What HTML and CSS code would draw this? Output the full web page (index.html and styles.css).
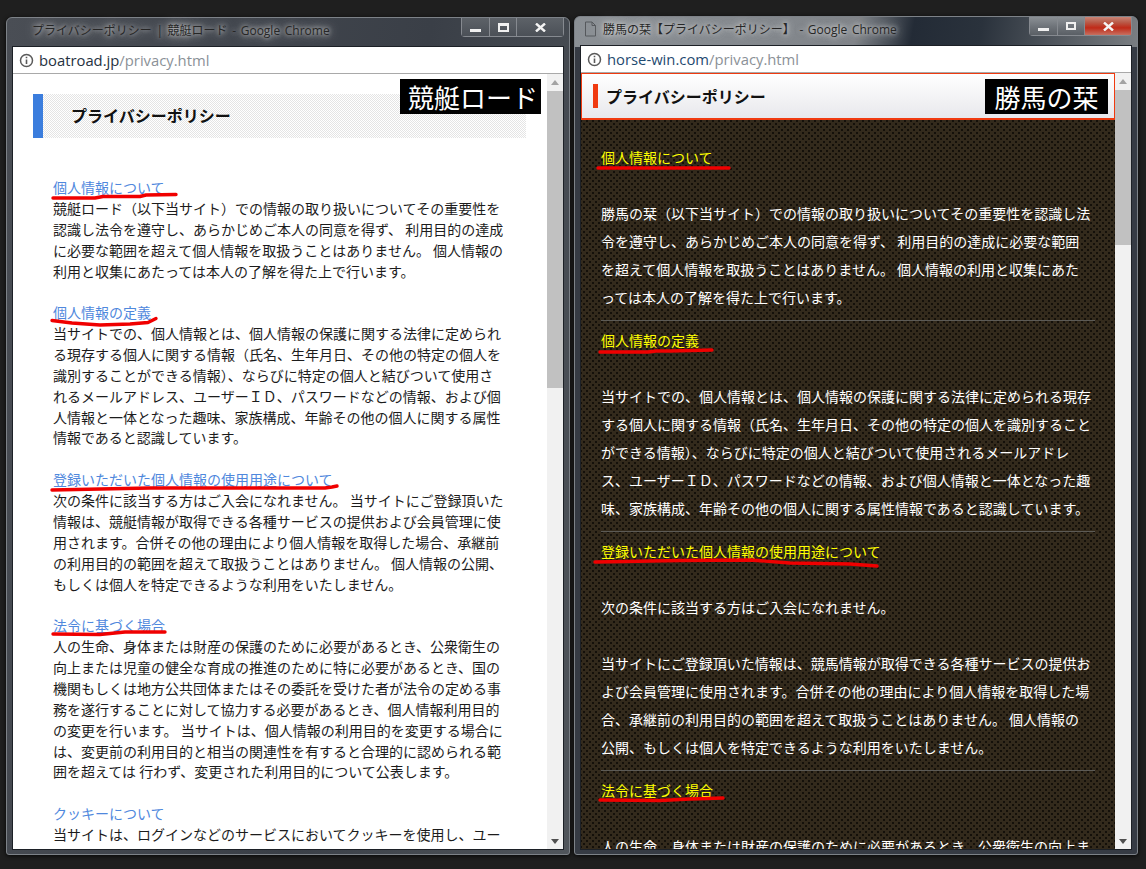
FILE: index.html
```html
<!DOCTYPE html>
<html lang="ja">
<head>
    <meta charset="UTF-8">
    <meta name="viewport" content="width=device-width, initial-scale=1.0">
    <title>プライバシーポリシー比較</title>
    <link rel="stylesheet" href="styles.css">
</head>
<body>

    <div class="desktop">

        <!-- 左のウィンドウ -->
        <div class="window window_left">
            <div class="titlebar">
                <div class="tab_title">
                    <span class="title_text">プライバシーポリシー | 競艇ロード - Google Chrome</span>
                </div>
                <div class="controls">
                    <span class="ctrl ctrl_min"><i class="icon_min"></i></span>
                    <span class="ctrl ctrl_max"><i class="icon_max"></i></span>
                    <span class="ctrl ctrl_close">
                        <svg width="11" height="9" viewBox="0 0 11 9"><path d="M1 0.5 L10 8.5 M10 0.5 L1 8.5" stroke="#f4f4f4" stroke-width="2.4"/></svg>
                    </span>
                </div>
            </div>
            <div class="inner">
                <div class="urlbar">
                    <svg class="info" width="15" height="15" viewBox="0 0 15 15"><circle cx="7.5" cy="7.5" r="6" fill="none" stroke="#5a5a5a" stroke-width="1.5"/><path d="M7.5 6.5 V11 M7.5 3.8 V5.2" stroke="#5a5a5a" stroke-width="1.6"/></svg>
                    <span class="host">boatroad.jp</span><span class="path">/privacy.html</span>
                </div>
                <div class="view">
                    <div class="page page_boat">
                        <h1 class="boat_head">プライバシーポリシー</h1>

                        <h2 class="boat_link">個人情報について</h2>
                        <p class="boat_text">競艇ロード（以下当サイト）での情報の取り扱いについてその重要性を<br>認識し法令を遵守し、あらかじめご本人の同意を得ず、 利用目的の達成<br>に必要な範囲を超えて個人情報を取扱うことはありません。 個人情報の<br>利用と収集にあたっては本人の了解を得た上で行います。</p>

                        <h2 class="boat_link">個人情報の定義</h2>
                        <p class="boat_text">当サイトでの、個人情報とは、個人情報の保護に関する法律に定められ<br>る現存する個人に関する情報（氏名、生年月日、その他の特定の個人を<br>識別することができる情報）、ならびに特定の個人と結びついて使用さ<br>れるメールアドレス、ユーザーＩＤ、パスワードなどの情報、および個<br>人情報と一体となった趣味、家族構成、年齢その他の個人に関する属性<br>情報であると認識しています。</p>

                        <h2 class="boat_link">登録いただいた個人情報の使用用途について</h2>
                        <p class="boat_text">次の条件に該当する方はご入会になれません。 当サイトにご登録頂いた<br>情報は、競艇情報が取得できる各種サービスの提供および会員管理に使<br>用されます。合併その他の理由により個人情報を取得した場合、承継前<br>の利用目的の範囲を超えて取扱うことはありません。 個人情報の公開、<br>もしくは個人を特定できるような利用をいたしません。</p>

                        <h2 class="boat_link">法令に基づく場合</h2>
                        <p class="boat_text">人の生命、身体または財産の保護のために必要があるとき、公衆衛生の<br>向上または児童の健全な育成の推進のために特に必要があるとき、国の<br>機関もしくは地方公共団体またはその委託を受けた者が法令の定める事<br>務を遂行することに対して協力する必要があるとき、個人情報利用目的<br>の変更を行います。 当サイトは、個人情報の利用目的を変更する場合に<br>は、変更前の利用目的と相当の関連性を有すると合理的に認められる範<br>囲を超えては 行わず、変更された利用目的について公表します。</p>

                        <h2 class="boat_link">クッキーについて</h2>
                        <p class="boat_text">当サイトは、ログインなどのサービスにおいてクッキーを使用し、ユー</p>
                    </div>
                    <div class="scrollbar">
                        <span class="arrow_up"></span>
                        <span class="thumb thumb_left"></span>
                        <span class="arrow_down"></span>
                    </div>
                </div>
            </div>
        </div>

        <!-- 右のウィンドウ -->
        <div class="window window_right">
            <div class="titlebar">
                <div class="tab_title">
                    <svg class="page_icon" width="13" height="16" viewBox="0 0 13 16"><path d="M1.5 1 H8 L11.5 4.5 V15 H1.5 Z M8 1 V4.5 H11.5" fill="none" stroke="#55585c" stroke-width="1"/></svg>
                    <span class="title_text">勝馬の栞【プライバシーポリシー】 - Google Chrome</span>
                </div>
                <div class="controls">
                    <span class="ctrl ctrl_min"><i class="icon_min"></i></span>
                    <span class="ctrl ctrl_max"><i class="icon_max icon_max_small"></i></span>
                    <span class="ctrl ctrl_close ctrl_red">
                        <svg width="11" height="9" viewBox="0 0 11 9"><path d="M1 0.5 L10 8.5 M10 0.5 L1 8.5" stroke="#f4f4f4" stroke-width="2.4"/></svg>
                    </span>
                </div>
            </div>
            <div class="inner">
                <div class="urlbar">
                    <svg class="info" width="15" height="15" viewBox="0 0 15 15"><circle cx="7.5" cy="7.5" r="6" fill="none" stroke="#5a5a5a" stroke-width="1.5"/><path d="M7.5 6.5 V11 M7.5 3.8 V5.2" stroke="#5a5a5a" stroke-width="1.6"/></svg>
                    <span class="host host_blue">horse-win.com</span><span class="path">/privacy.html</span>
                </div>
                <div class="view">
                    <div class="page page_horse">
                        <div class="horse_head">
                            <h1 class="horse_title">プライバシーポリシー</h1>
                        </div>

                        <div class="horse_section">
                            <h2 class="horse_link">個人情報について</h2>
                            <p class="horse_text">勝馬の栞（以下当サイト）での情報の取り扱いについてその重要性を認識し法<br>令を遵守し、あらかじめご本人の同意を得ず、 利用目的の達成に必要な範囲<br>を超えて個人情報を取扱うことはありません。 個人情報の利用と収集にあた<br>っては本人の了解を得た上で行います。</p>
                        </div>

                        <div class="horse_section">
                            <h2 class="horse_link">個人情報の定義</h2>
                            <p class="horse_text">当サイトでの、個人情報とは、個人情報の保護に関する法律に定められる現存<br>する個人に関する情報（氏名、生年月日、その他の特定の個人を識別すること<br>ができる情報）、ならびに特定の個人と結びついて使用されるメールアドレ<br>ス、ユーザーＩＤ、パスワードなどの情報、および個人情報と一体となった趣<br>味、家族構成、年齢その他の個人に関する属性情報であると認識しています。</p>
                        </div>

                        <div class="horse_section">
                            <h2 class="horse_link">登録いただいた個人情報の使用用途について</h2>
                            <p class="horse_text">次の条件に該当する方はご入会になれません。<br><br>当サイトにご登録頂いた情報は、競馬情報が取得できる各種サービスの提供お<br>よび会員管理に使用されます。合併その他の理由により個人情報を取得した場<br>合、承継前の利用目的の範囲を超えて取扱うことはありません。 個人情報の<br>公開、もしくは個人を特定できるような利用をいたしません。</p>
                        </div>

                        <div class="horse_section">
                            <h2 class="horse_link">法令に基づく場合</h2>
                            <p class="horse_text">人の生命、身体または財産の保護のために必要があるとき、公衆衛生の向上ま</p>
                        </div>
                    </div>
                    <div class="scrollbar">
                        <span class="arrow_up"></span>
                        <span class="thumb thumb_right"></span>
                        <span class="arrow_down"></span>
                    </div>
                </div>
            </div>
        </div>

        <!-- 上に重ねた注釈 -->
        <span class="tag tag_boat">競艇ロード</span>
        <span class="tag tag_horse">勝馬の栞</span>

        <svg class="marks" width="1146" height="869" viewBox="0 0 1146 869">
            <path d="M53 198 L95 198 L103 196.5 L140 196.5 L146 195 L176 194.5"/>
            <path d="M52 320.5 L72 323 L100 325 L130 324 L148 322.5 L156 318.5"/>
            <path d="M52 490 L100 489 L150 488 L325 488 L332 487 L337 486"/>
            <path d="M53 634 L100 634.5 L125 632 L165 632"/>
            <path d="M598 168 L729 168"/>
            <path d="M600 352 L648 352 L656 351 L670 351 L712 350"/>
            <path d="M595 562 L680 560.5 L750 560 L790 563 L850 564 L877 566"/>
            <path d="M600 800 L660 800.5 L690 799 L723 798"/>
        </svg>

    </div>

</body>
</html>
```

FILE: styles.css
```css
*{box-sizing: border-box;}
body{margin: 0; background: #1f1f1f; font-family: "Noto Sans CJK JP", "Noto Sans", sans-serif;}
h1, h2, p{margin: 0;}

.desktop{position: relative; width: 1146px; height: 869px; overflow: hidden; background: #1f1f1f;}

/* ウィンドウ枠 */
.window{position: absolute; width: 564px; display: flex; flex-direction: column; padding: 0 5px 4px; border: 1px solid #7d8288; border-radius: 6px 6px 3px 3px; box-shadow: 0 1px 4px rgba(0,0,0,.8);}
.window_left{left: 6px; top: 17px; height: 838px; background: linear-gradient(100deg, #4a4e55 0%, #3a3f47 60%, #50555b 100%);}
.window_right{left: 574px; top: 16px; height: 839px; background: linear-gradient(100deg, #8b9095 0%, #808489 50%, #232b36 60%, #2a323c 72%, #7a7e82 100%); background-size: 100% 30px; background-repeat: no-repeat; background-color: #363b44;}

.titlebar{display: flex; justify-content: space-between; height: 28px; flex: none;}
.tab_title{display: flex; align-items: center; height: 24px; padding-left: 20px;}
.window_right .tab_title{padding-left: 4px;}
.page_icon{margin-right: 6px;}
.title_text{font-family: "Open Sans", "Noto Sans CJK JP", sans-serif; font-size: 12px; word-spacing: 1.5px; color: #262626; white-space: nowrap; text-shadow: 0 0 4px rgba(235,235,235,.8), 0 0 9px rgba(225,225,225,.7), 0 0 14px rgba(215,215,215,.6);}

.controls{display: flex; height: 19px; border: 1px solid #868a90; border-top: 0; border-radius: 0 0 4px 4px;}
.ctrl{display: flex; align-items: center; justify-content: center; height: 100%; background: linear-gradient(#5d6268, #4b5057);}
.window_right .ctrl{background: linear-gradient(#8b9095, #70757b 50%, #5a5f65);}
.ctrl_min{width: 28px; border-right: 1px solid #868a90;}
.ctrl_max{width: 27px; border-right: 1px solid #868a90;}
.ctrl_close{width: 46px;}
.window_right .ctrl_red{background: linear-gradient(#c98576 0%, #b95a48 30%, #c02a18 60%, #c77060 100%);}
.icon_min{display: block; width: 11px; height: 3px; margin-top: 6px; background: #f0f0f0;}
.icon_max{display: block; width: 11px; height: 9px; border: 2px solid #f0f0f0; border-top-width: 3px;}
.icon_max_small{width: 10px; height: 8px; border-top-width: 2px;}

.inner{flex: 1; display: flex; flex-direction: column; min-height: 0; border: 1px solid #1c2026; background: #fff;}

.urlbar{display: flex; align-items: center; flex: none; height: 27px; padding-left: 6px; background: #fff; border-bottom: 1px solid #a9a9a9; font-family: "Open Sans", "Noto Sans", sans-serif; font-size: 14.8px; white-space: nowrap;}
.info{margin-right: 5px;}
.host{color: #26323f;}
.host_blue{color: #1f4a70;}
.path{color: #8b9197;}

.view{flex: 1; display: flex; min-height: 0;}
.page{flex: 1; min-width: 0; overflow: hidden;}

/* 競艇ロード */
.page_boat{background: #fff; padding: 20px 0 0 40px;}
.boat_head{width: 493px; height: 44px; margin: 0 0 39px -20px; padding-left: 28px; border-left: 10px solid #3b7ddd; background: repeating-conic-gradient(#e4e4e4 0 25%, #fff 0 50%) 0 0 / 2px 2px; font-size: 16px; font-weight: 700; line-height: 42px; color: #111;}
.boat_link{font-size: 14px; font-weight: 400; line-height: 20.87px; color: #4f88dd;}
.boat_text{font-size: 14px; line-height: 20.87px; color: #1c1c1c; margin-bottom: 20.87px; white-space: nowrap;}

/* 勝馬の栞 */
.page_horse{background-color: #332a1c; background-image: radial-gradient(#14100a 1px, transparent 1.3px), radial-gradient(#14100a 1px, transparent 1.3px); background-size: 6px 6px; background-position: 0 0, 3px 3px;}
.horse_head{display: flex; align-items: center; height: 47px; padding-left: 11px; border: 1px solid #f03a10; border-width: 1px 1px 2px; background: linear-gradient(#ffffff, #e8e8ec);}
.horse_title{padding-left: 8px; border-left: 5px solid #f03a10; font-size: 16px; font-weight: 700; line-height: 24px; color: #111;}
.horse_section{margin: 0 20px; padding: 23px 0 9px; border-bottom: 1px solid #5c5a55;}
.horse_section + .horse_section{padding-top: 5px;}
.horse_section:last-child{border-bottom: 0;}
.horse_link{font-size: 14px; font-weight: 400; line-height: 28px; margin-bottom: 28px; color: #ffff00;}
.horse_text{font-size: 14px; line-height: 28px; color: #fff; white-space: nowrap;}

/* スクロールバー */
.scrollbar{position: relative; flex: none; width: 16px; background: #f1f1f1;}
.thumb{position: absolute; left: 0; width: 100%; background: #c1c1c1;}
.thumb_left{top: 17px; height: 297px;}
.thumb_right{top: 17px; height: 155px;}
.arrow_up, .arrow_down{position: absolute; left: 4px; width: 0; height: 0; border: 4px solid transparent;}
.arrow_up{top: 2px; border-bottom: 5px solid #a3a3a3;}
.arrow_down{bottom: 1px; border-top: 5px solid #505050;}

/* 注釈 */
.tag{position: absolute; top: 79px; height: 35px; background: #000; color: #fff; font-size: 26px; line-height: 35px; text-align: center; white-space: nowrap;}
.tag_boat{left: 400px; width: 141px; padding-left: 5px;}
.tag_horse{left: 985px; width: 123px;}
.marks{position: absolute; left: 0; top: 0; pointer-events: none;}
.marks path{fill: none; stroke: #f00000; stroke-width: 3.4; stroke-linecap: round; stroke-linejoin: round;}
```
